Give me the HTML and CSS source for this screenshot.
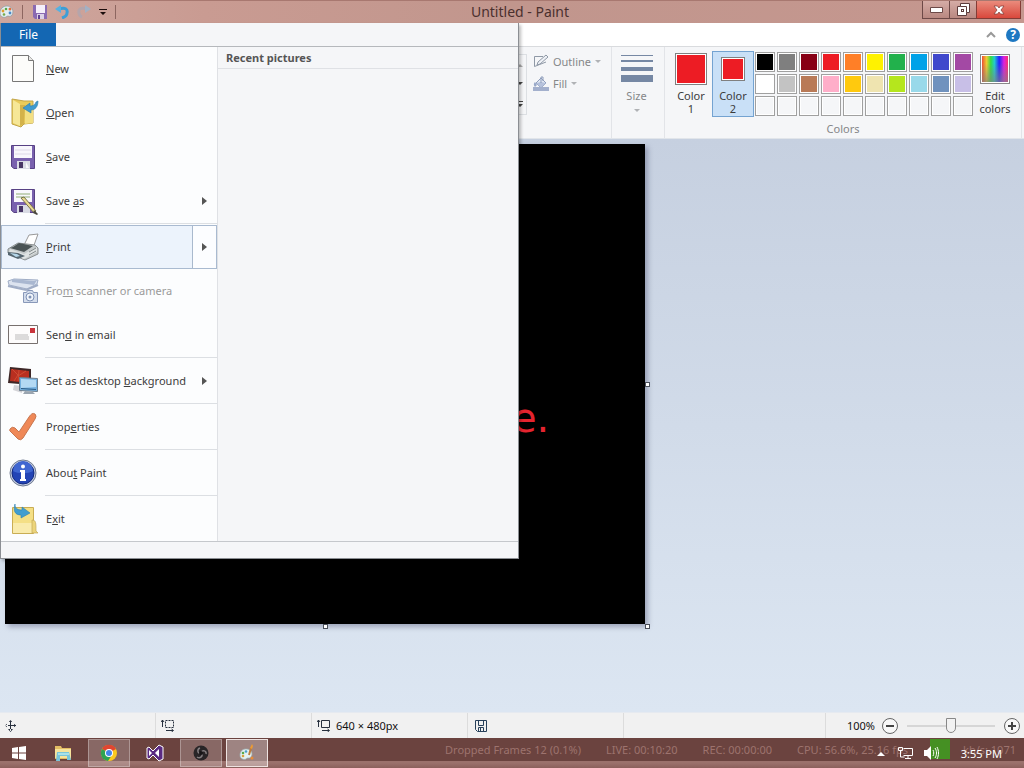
FILE: index.html
```html
<!DOCTYPE html>
<html lang="en">
<head>
    <meta charset="UTF-8">
    <meta name="viewport" content="width=device-width, initial-scale=1.0">
    <title>Untitled - Paint</title>
    <link rel="stylesheet" href="styles.css">
</head>
<body>
    <!-- Title bar -->
    <header class="titlebar">
        <div class="quick">
            <svg class="app-icon" width="14" height="14" viewBox="0 0 14 14"><path d="M7 1C3 1 0 4 0 8c0 4 4 5 6 4 2-2 3 0 5-1 3-2 3-10-4-10z" fill="#e4eef2" stroke="#8a9ba0" stroke-width=".7"/><circle cx="3" cy="6" r="1.4" fill="#e0a030"/><circle cx="6" cy="4" r="1.3" fill="#58a848"/><circle cx="10" cy="4" r="1.5" fill="#de7040"/><circle cx="10" cy="8" r="1.4" fill="#4b8bc8"/><circle cx="4" cy="9.500" r="1.300" fill="#74a94c"/></svg>
            <span class="bar"></span>
            <button class="quick-btn" aria-label="Save"><svg width="14" height="14" viewBox="0 0 14 14"><path d="M0 0h14v14H2l-2-2z" fill="#8a6ab2"/><path d="M3 0h9v8H3z" fill="#f5effa"/><path d="M4 9h7v5H4z" fill="#dcd2e6"/><path d="M5 10h2v4H5z" fill="#614194"/></svg></button>
            <button class="quick-btn" aria-label="Undo"><svg width="14" height="14" viewBox="0 0 14 14"><path d="M4 4c6-2 9 0 8 4 0 2-2 4-5 5" fill="none" stroke="#3d9ed6" stroke-width="3"/><path d="M0 4l6-4v8z" fill="#55b1e2"/></svg></button>
            <button class="quick-btn redo" aria-label="Redo"><svg width="14" height="14" viewBox="0 0 14 14"><path d="M10 4C4 2 1 4 2 8c0 2 1 3 3 4" fill="none" stroke="#b5a5ab" stroke-width="3"/><path d="M14 4L8 0v8z" fill="#a3b1c4"/></svg></button>
            <button class="quick-btn" aria-label="Customize"><svg width="8" height="8" viewBox="0 0 8 8"><path d="M0 1h8v1H0zM1 4h6L4 7z" fill="#1b0d0c"/></svg></button>
            <span class="bar"></span>
        </div>
        <h1 class="title">Untitled - Paint</h1>
        <div class="window-buttons">
            <button class="win-btn" aria-label="Minimize"><svg width="13" height="6" viewBox="0 0 13 6"><path d="M.5.500h12v5H.5z" fill="#fff" stroke="#6d4a48"/></svg></button>
            <button class="win-btn" aria-label="Restore"><svg width="13" height="13" viewBox="0 0 13 13"><path d="M3.500.500h9v9h-3v3h-9v-9h3z" fill="#fff" stroke="#5d3d3c"/><path d="M3.500 3.500h6v6" fill="none" stroke="#5d3d3c"/><path d="M4 6h3v3H4z" fill="#5d3d3c"/><path d="M5 7h1v1H5z" fill="#fff"/></svg></button>
            <button class="win-btn close" aria-label="Close"><svg width="12" height="10" viewBox="0 0 12 10"><path d="M1 1h3.500L6 3l1.500-2H11L8 5l3 4H7.500L6 7 4.500 9H1l3-4z" fill="#fff" stroke="#7c3630" stroke-width=".7"/></svg></button>
        </div>
    </header>

    <div class="tabs">
        <svg width="10" height="7" viewBox="0 0 10 7"><path d="M1 6l4-4 4 4" fill="none" stroke="#999" stroke-width="2"/></svg>
        <button class="help" aria-label="Help">?</button>
    </div>

    <!-- Ribbon -->
    <section class="ribbon">
        <div class="group shapes">
            <div class="gallery-scroll">
                <svg width="6" height="4" viewBox="0 0 6 4"><path d="M0 4l3-3 3 3z" fill="#aaa"/></svg>
                <svg width="6" height="4" viewBox="0 0 6 4"><path d="M0 0h6L3 3z" fill="#444"/></svg>
                <svg width="6" height="6" viewBox="0 0 6 6"><path d="M0 0h6v1H0zM0 3h6L3 6z" fill="#444"/></svg>
            </div>
            <div class="shape-options">
                <button class="option">
                    <svg width="16" height="14" viewBox="0 0 16 14"><path d="M10 2.500H1.500v10L13 8" fill="none" stroke="#8f99a6"/><path d="M4 11l1-3 8-7 2 2-8 7z" fill="#eef1f6" stroke="#8f99a6"/></svg>
                    Outline <i class="caret"></i>
                </button>
                <button class="option">
                    <svg width="16" height="15" viewBox="0 0 16 15"><path d="M0 11h16v4H0z" fill="#a3b0cd"/><path d="M3 7l5-5 5 5-5 5z" fill="#e2e8f3" stroke="#8d9cba"/><path d="M3 7l5-1 5 1-5 5z" fill="#b6c2dc"/><path d="M8 7V1h2v4" fill="none" stroke="#8d9cba"/><path d="M2 6c-2 2-1 4 0 5l2-2z" fill="#98a8c8"/></svg>
                    Fill <i class="caret"></i>
                </button>
            </div>
        </div>
        <div class="group">
            <button class="size-btn">
                <svg width="32" height="28" viewBox="0 0 32 28"><path d="M0 1h32v1H0zM0 6h32v2H0zM0 13h32v4H0zM0 21h32v7H0z" fill="#7688a4"/></svg>
                <span>Size</span>
                <i class="caret"></i>
            </button>
        </div>
        <div class="group colors">
            <div class="colors-row">
                <button class="color-btn"><span class="swatch-big"></span>Color<br>1</button>
                <button class="color-btn active"><span class="swatch-big small"></span>Color<br>2</button>
                <div class="palette">
                    <button class="cell black" aria-label="Black"></button>
                    <button class="cell gray" aria-label="Gray"></button>
                    <button class="cell dark-red" aria-label="Dark red"></button>
                    <button class="cell red" aria-label="Red"></button>
                    <button class="cell orange" aria-label="Orange"></button>
                    <button class="cell yellow" aria-label="Yellow"></button>
                    <button class="cell green" aria-label="Green"></button>
                    <button class="cell turquoise" aria-label="Turquoise"></button>
                    <button class="cell indigo" aria-label="Indigo"></button>
                    <button class="cell purple" aria-label="Purple"></button>
                    <button class="cell white" aria-label="White"></button>
                    <button class="cell light-gray" aria-label="Light gray"></button>
                    <button class="cell brown" aria-label="Brown"></button>
                    <button class="cell rose" aria-label="Rose"></button>
                    <button class="cell gold" aria-label="Gold"></button>
                    <button class="cell light-yellow" aria-label="Light yellow"></button>
                    <button class="cell lime" aria-label="Lime"></button>
                    <button class="cell light-turquoise" aria-label="Light turquoise"></button>
                    <button class="cell blue-gray" aria-label="Blue-gray"></button>
                    <button class="cell lavender" aria-label="Lavender"></button>
                    <button class="cell" aria-label="Custom 1"></button>
                    <button class="cell" aria-label="Custom 2"></button>
                    <button class="cell" aria-label="Custom 3"></button>
                    <button class="cell" aria-label="Custom 4"></button>
                    <button class="cell" aria-label="Custom 5"></button>
                    <button class="cell" aria-label="Custom 6"></button>
                    <button class="cell" aria-label="Custom 7"></button>
                    <button class="cell" aria-label="Custom 8"></button>
                    <button class="cell" aria-label="Custom 9"></button>
                    <button class="cell" aria-label="Custom 10"></button>
                </div>
                <button class="color-btn edit"><span class="rainbow"></span>Edit<br>colors</button>
            </div>
            <div class="group-name">Colors</div>
        </div>
    </section>

    <!-- Drawing area -->
    <main class="workspace">
        <div class="canvas">
            <span class="canvas-text">e.</span>
            <span class="handle right"></span>
            <span class="handle bottom"></span>
            <span class="handle corner"></span>
        </div>
    </main>

    <!-- Status bar -->
    <footer class="status">
        <div class="status-cell move"><svg width="12" height="12" viewBox="0 0 12 12"><path d="M5 1h1v10H5zM0 6V5h11v1zM3 3l2.500-3L8 3zM3 9l2.500 3L8 9zM3 3L0 5.500 3 8zM8 3l3 2.500L8 8z" fill="#27303e"/><path d="M2 2h3v3H2zM6 2h3v3H6zM2 6h3v3H2zM6 6h3v3H6z" fill="#f1f1f1"/></svg></div>
        <div class="status-cell"><svg width="14" height="13" viewBox="0 0 14 13"><path d="M1.500 1v7M0 3l1.500-2L3 3M5 11.500h7M10.500 10l2 1.500-2 1.500" fill="none" stroke="#27303e"/><path d="M4.500 1.500h8v7h-8z" fill="none" stroke="#27303e" stroke-dasharray="2 1"/></svg></div>
        <div class="status-cell"><svg width="14" height="13" viewBox="0 0 14 13"><path d="M1.500 1v7M0 3l1.500-2L3 3M5 11.500h7M10.500 10l2 1.500-2 1.500M4.500 1.500h8v7h-8z" fill="none" stroke="#27303e"/></svg>640 × 480px</div>
        <div class="status-cell disk"><svg width="12" height="12" viewBox="0 0 12 12"><path d="M.5 .5h11v11h-9l-2-2zM3.500 .5v5h5v-5M3.500 11.500v-4h5v4M5.500 8v3" fill="none" stroke="#27405a"/></svg></div>
        <div class="status-cell"></div>
        <div class="zoom">
            <label for="zoom">100%</label>
            <button class="zoom-btn" aria-label="Zoom out"><svg width="8" height="8" viewBox="0 0 8 8"><path d="M0 3h8v2H0z" fill="#444"/></svg></button>
            <input id="zoom" class="slider" type="range" min="0" max="100" value="50">
            <button class="zoom-btn" aria-label="Zoom in"><svg width="8" height="8" viewBox="0 0 8 8"><path d="M0 3h8v2H0zM3 0h2v8H3z" fill="#444"/></svg></button>
        </div>
    </footer>

    <!-- Taskbar -->
    <nav class="taskbar">
        <button class="task start" aria-label="Start"><svg width="14" height="14" viewBox="0 0 14 14"><path d="M0 2l6-1v5.500H0zM7 1l7-1v6.500H7zM0 7.500h6V13l-6-1zM7 7.500h7V14l-7-1z" fill="#fff"/></svg></button>
        <button class="task" aria-label="File Explorer"><svg width="18" height="18" viewBox="0 0 18 18"><path d="M1 2h6l1 2h9v11H1z" fill="#e3bd63"/><path d="M1 5h16v9H1z" fill="#f7e39b"/><path d="M3 8h12l2 8h-4v-4H6v5H2z" fill="#79c5d9"/><path d="M4 9h11v2H4z" fill="#a9e1e8"/></svg></button>
        <button class="task open" aria-label="Chrome"><svg width="18" height="18" viewBox="0 0 18 18"><circle cx="9" cy="9" r="8" fill="#fbc91f"/><path d="M9 9L2 5a8 8 0 0 1 14-0z" fill="#df4632"/><path d="M2 5a8 8 0 0 0 6 12l4-6-3-2z" fill="#2ea352"/><circle cx="9" cy="9" r="4" fill="#fff"/><circle cx="9" cy="9" r="3" fill="#4285e8"/></svg></button>
        <button class="task" aria-label="Visual Studio"><svg width="18" height="18" viewBox="0 0 18 18"><path d="M1 4l2-1 4 4 6-6 4 2v12l-4 2-6-6-4 4-2-1z" fill="#5b2b83" stroke="#fff"/><path d="M3 6v6l3-3zM9 9l4 4V5z" fill="#fff"/></svg></button>
        <button class="task open" aria-label="OBS"><svg width="16" height="16" viewBox="0 0 16 16"><circle cx="8" cy="8" r="7.500" fill="#292527"/><path d="M8 8c-4 1-4-4-1-5M8 8c1-4 6-2 5 1M8 8c3 3-1 6-4 4" fill="none" stroke="#847e80" stroke-width="1.500"/><circle cx="8" cy="8" r="2" fill="#171517"/></svg></button>
        <button class="task open current" aria-label="Paint"><svg width="16" height="18" viewBox="0 0 16 18"><path d="M7 5C3 5 1 8 1 11c0 4 4 5 6 4 1-2 3 0 5-2 2-3 1-8-5-8z" fill="#e5f1f2" stroke="#9cb3b6" stroke-width=".7"/><circle cx="4" cy="9" r="1.300" fill="#5aa94b"/><circle cx="7" cy="7.500" r="1.300" fill="#49a0ca"/><circle cx="4" cy="12" r="1.300" fill="#d9a13d"/><path d="M10 11l2-7" stroke="#bd7d3c" stroke-width="2"/><path d="M11 4l2-4 1 2-1 3z" fill="#ed9a32"/><circle cx="13" cy="14" r="1.500" fill="#e78c37"/></svg></button>
        <div class="stats">
            <span>Dropped Frames 12 (0.1%)</span>
            <span>LIVE: 00:10:20</span>
            <span>REC: 00:00:00</span>
            <span>CPU: 56.6%, 25.16 fps</span>
            <span class="bitrate">kb/s: 1071</span>
        </div>
        <div class="tray">
            <svg width="8" height="5" viewBox="0 0 8 5"><path d="M0 5l4-4 4 4z" fill="#fff"/></svg>
            <svg width="15" height="14" viewBox="0 0 15 14"><path d="M5.500 2.500h9v7h-9M10 10v3M7 12.500h6M2.500 5v6h4" fill="none" stroke="#fff"/><path d="M.5 1.500h4v3h-4z" fill="none" stroke="#fff"/></svg>
            <span class="live-block"></span>
            <svg class="speaker" width="15" height="14" viewBox="0 0 15 14"><path d="M0 4h3l4-4v14l-4-4H0z" fill="#fff"/><path d="M9 4c1 2 1 4 0 6M11 2c2 3 2 7 0 10M13 1c2 4 2 8 0 12" fill="none" stroke="#fff"/></svg>
            <time class="clock">3:55 PM</time>
        </div>
    </nav>

    <!-- File menu, lies over the ribbon and the canvas -->
    <div class="file-menu">
        <div class="menu-top"><button class="file-tab">File</button></div>
        <div class="menu-body">
            <ul class="menu-list">
                <li><button class="item">
                    <svg width="30" height="30" viewBox="0 0 30 30"><path d="M4.500 1.500h16l5 5v21h-21z" fill="#fcfcfa" stroke="#777"/><path d="M20.500 1.500v5h5" fill="#e8e8e6" stroke="#777"/></svg>
                    <span><u>N</u>ew</span></button></li>
                <li><button class="item">
                    <svg width="30" height="30" viewBox="0 0 30 30"><path d="M4 1l12 2h9v22l-9 1-3 3-9-3z" fill="#e9cb5b" stroke="#c2a548"/><path d="M5 2l7 4v22l-7-3z" fill="#f6e797"/><path d="M12 7h5l-1 19-4 2z" fill="#d3b24a"/><path d="M17 11h8v14l-8 1z" fill="#f3df82"/><path d="M30 3c0 6-3 9-7 9v3l-8-5 7-5v3c3 0 5-1 6-4z" fill="#3f9bcf" stroke="#2a7cae" stroke-width=".6"/></svg>
                    <span><u>O</u>pen</span></button></li>
                <li><button class="item">
                    <svg width="30" height="30" viewBox="0 0 30 30"><path d="M3.500 3.500h23v23H6l-2.500-2z" fill="#7961ae" stroke="#574184"/><path d="M6 4h18v12H6z" fill="#f8f7fc"/><path d="M7 8h16M7 12h16" stroke="#ded9e8"/><path d="M9 19h13v8H9z" fill="#d9dbe4"/><path d="M11 20h4v6h-4z" fill="#473664"/><path d="M18 20l3 6h-3z" fill="#f9f9fb"/></svg>
                    <span><u>S</u>ave</span></button></li>
                <li><button class="item">
                    <svg width="30" height="30" viewBox="0 0 30 30"><path d="M3.500 3.500h23v23H6l-2.500-2z" fill="#7961ae" stroke="#574184"/><path d="M6 4h18v12H6z" fill="#f8f7fc"/><path d="M8 8h14M8 11h14" stroke="#91ad77"/><path d="M9 19h13v8H9z" fill="#d9dbe4"/><path d="M11 20h4v6h-4z" fill="#473664"/><path d="M13 12l3-1 12 14-2 2z" fill="#e9db91" stroke="#77704a"/><path d="M26 24l4 4-1 1-4-2z" fill="#4b4842"/></svg>
                    <span>Save <u>a</u>s</span><i class="arrow"></i></button></li>
                <li class="divided hovered"><button class="item">
                    <svg width="32" height="30" viewBox="0 0 32 30"><path d="M17 13l5-10 9-1-5 14z" fill="#fff" stroke="#999"/><path d="M1 17l10-6 17 2 3 3v6l-13 6-17-7z" fill="#c3c8c9" stroke="#8a8f90"/><path d="M6 15l6-4 14 3-9 6-14-4z" fill="#4b5455"/><path d="M3 17l14 5 13-7v5l-13 7-15-6z" fill="#dee2e2"/><path d="M1 20l10 1 7 3-7 3-10-4z" fill="#55656f"/><path d="M3 21l7 1 3 2-4 1z" fill="#b4d5e8"/><path d="M22 20l7-4M22 23l7-4" stroke="#82898a"/></svg>
                    <span><u>P</u>rint</span><i class="arrow"></i></button></li>
                <li><button class="item" disabled>
                    <svg width="32" height="30" viewBox="0 0 32 30"><path d="M1 5l6-2 24 1-1 4-10 5-18-4z" fill="#dce3ef" stroke="#a0adc6"/><path d="M5 3l22 2 3-1-3 5L5 6z" fill="#a9b7d0"/><path d="M1 10l18 4 12-5" fill="none" stroke="#a0adc6" stroke-width="2"/><path d="M16.500 16.500h3l1-2h5l1 2h4v10h-14z" fill="#d3dceb" stroke="#8898b9"/><circle cx="23" cy="21" r="4" fill="#f0f4fa" stroke="#7e91b5"/><circle cx="23" cy="21" r="1.500" fill="#7e91b5"/></svg>
                    <span>Fro<u>m</u> scanner or camera</span></button></li>
                <li><button class="item">
                    <svg width="32" height="30" viewBox="0 0 32 30"><path d="M1.500 5.500h29v18h-29z" fill="#fdfcfc" stroke="#77706e"/><path d="M23 8h5v5h-5z" fill="#c9343c"/><path d="M8 15h13M8 17h14M8 19h14" stroke="#aaa" stroke-width=".8"/></svg>
                    <span>Sen<u>d</u> in email</span></button></li>
                <li class="divided"><button class="item">
                    <svg width="32" height="30" viewBox="0 0 32 30"><path d="M3 1l21 2v16L1 17z" fill="#3d2727"/><path d="M4 3l18 2v12L3 15z" fill="#b92f20"/><path d="M5 3l6 6-4 6M12 4l-1 11M19 5l-8 5" stroke="#cf4c34" fill="none"/><path d="M7 19l8 1v7l-9-3z" fill="#d4d4d8"/><path d="M12.500 11.500l18 1v13l-18-1z" fill="#75b1e0" stroke="#6f7f8d"/><path d="M14 13l15 1v7l-15 1z" fill="#b4d9f3"/><path d="M14 22l15 1v1l-15-1z" fill="#2c5a83"/><path d="M18 25l8 1 2 2H16z" fill="#9aa5b0"/></svg>
                    <span>Set as desktop <u>b</u>ackground</span><i class="arrow"></i></button></li>
                <li class="divided"><button class="item">
                    <svg width="32" height="30" viewBox="0 0 32 30"><path d="M3 17q2-3 5-1l4 4L22 5q3-5 6-3 2 2 0 5L16 26q-2 3-5 1L4 20q-2-1-1-3z" fill="#ef8857" stroke="#c7764f"/></svg>
                    <span>Prop<u>e</u>rties</span></button></li>
                <li class="divided"><button class="item">
                    <svg width="30" height="30" viewBox="0 0 30 30"><circle cx="15" cy="15" r="13" fill="#c3cce0" stroke="#6f7a91"/><circle cx="15" cy="15" r="11" fill="#2344b5" stroke="#12297e"/><path d="M5 13a10 10 0 0 1 20 0c-5 3-15 3-20 0z" fill="#3f66d1"/><circle cx="15" cy="8.500" r="2" fill="#fff"/><path d="M12 12h5v9h1v2h-6v-2h1v-7h-1z" fill="#fff"/></svg>
                    <span>Abou<u>t</u> Paint</span></button></li>
                <li class="divided"><button class="item">
                    <svg width="30" height="32" viewBox="0 0 30 32"><path d="M4.500 4.500h21v26h-21z" fill="#f4df85" stroke="#c9ad54"/><path d="M5 20h20v10H5z" fill="#f9ebac"/><path d="M24 17c4 0 4 3 4 11l2 2h-6z" fill="#ecd47a" stroke="#c2a858" stroke-width=".7"/><path d="M7 1c0 4 2 6 7 6V4l8 6-9 5v-3c-6 0-8-4-6-11z" fill="#409dcf" stroke="#2d7fae" stroke-width=".6"/></svg>
                    <span>E<u>x</u>it</span></button></li>
            </ul>
            <div class="recent"><h2>Recent pictures</h2></div>
        </div>
        <div class="menu-bottom"></div>
    </div>
</body>
</html>
```
FILE: styles.css
```css
*,
*::before {
    box-sizing: border-box;
}

body {
    margin: 0;
    height: 100vh;
    display: flex;
    flex-direction: column;
    overflow: hidden;
    position: relative;
    font-family: "Noto Sans", sans-serif;
    font-size: 11px;
    line-height: 13px;
    color: #3c3c3c;
    background: #d5dfec;
}

button {
    margin: 0;
    padding: 0;
    border: 0;
    background: none;
    font: inherit;
    color: inherit;
}

svg {
    display: block;
    flex: none;
}

/* Title bar */
.titlebar {
    display: flex;
    height: 23px;
    flex: none;
    background: linear-gradient(90deg, #cfa79e, #c99b92 20%, #c1968d 50%, #c5978f);
    border-top: 1px solid #a87870;
}

.quick {
    display: flex;
    align-items: center;
    width: 118px;
    gap: 8px;
}

.bar {
    width: 1px;
    height: 14px;
    margin-right: 2px;
    background: #8d6660;
}

.title {
    flex: 1;
    margin: 0;
    text-align: center;
    font-size: 14px;
    line-height: 22px;
    font-weight: normal;
    color: #4b302e;
}

.window-buttons {
    display: flex;
    padding-right: 3px;
    height: 18px;
}

.win-btn {
    width: 27px;
    display: flex;
    align-items: center;
    justify-content: center;
    background: linear-gradient(#d5aca6, #b98881);
    border: 1px solid #6d4947;
    border-top: 0;
    border-right: 0;
}

.close {
    width: 45px;
    border: 1px solid #843c36;
    border-top: 0;
    background: linear-gradient(#ea8b7c, #d9483c);
}

.tabs {
    display: flex;
    flex: none;
    justify-content: flex-end;
    align-items: center;
    gap: 10px;
    height: 24px;
    padding-right: 4px;
    background: #fff;
    border-bottom: 1px solid #d9dbde;
}

.help {
    width: 14px;
    height: 14px;
    border-radius: 50%;
    background: #1e78c2;
    color: #fff;
    font-weight: bold;
    font-size: 12px;
    line-height: 14px;
}

/* Ribbon */
.ribbon {
    display: flex;
    flex: none;
    height: 92px;
    background: #f5f6f8;
    border-bottom: 1px solid #e1e5ea;
}

.group {
    display: flex;
    padding-top: 4px;
    border-right: 1px solid #e2e4e8;
    color: #858789;
}

.shapes {
    width: 612px;
    justify-content: flex-end;
    gap: 6px;
    padding-right: 10px;
}

.gallery-scroll {
    width: 11px;
    height: 61px;
    display: flex;
    flex-direction: column;
    justify-content: space-around;
    align-items: flex-start;
    margin-top: 3px;
    border: 1px solid #dcdfe3;
}

.shape-options {
    display: flex;
    flex-direction: column;
}

.option {
    display: flex;
    align-items: center;
    gap: 4px;
    height: 22px;
    padding-bottom: 2px;
    color: #858789;
}

.caret {
    border: 3px solid transparent;
    border-top-color: #b0b2b5;
    border-bottom: 0;
}

.size-btn {
    width: 49px;
    display: flex;
    flex-direction: column;
    align-items: center;
    padding-top: 3px;
    margin-right: 3px;
    gap: 7px;
}

.colors {
    flex-direction: column;
    padding: 4px 5px 0;
}

.colors-row {
    display: flex;
}

.color-btn {
    width: 42px;
    height: 66px;
    display: block;
    border: 1px solid transparent;
    color: #3c3c3c;
}

.active {
    background: #c9e0f7;
    border-color: #74a3d1;
}

.swatch-big {
    display: block;
    width: 32px;
    height: 32px;
    margin: 0 auto 4px;
    background: #ed1c24;
    border: 1px solid #808080;
    box-shadow: inset 0 0 0 1px #fff;
}

.small {
    width: 24px;
    height: 24px;
    margin: 4px auto 8px;
}

.palette {
    display: grid;
    grid-template-columns: repeat(10, 20px);
    grid-auto-rows: 20px;
    gap: 2px;
    margin: 1px 1px 0;
}

.cell {
    border: 1px solid #a0a0a0;
    box-shadow: inset 0 0 0 1px #fff;
}

.black { background: #000; }
.gray { background: #7f7f7f; }
.dark-red { background: #880015; }
.red { background: #ed1c24; }
.orange { background: #ff7f27; }
.yellow { background: #fff200; }
.green { background: #22b14c; }
.turquoise { background: #00a2e8; }
.indigo { background: #3f48cc; }
.purple { background: #a349a4; }
.white { background: #fff; }
.light-gray { background: #c3c3c3; }
.brown { background: #b97a57; }
.rose { background: #ffaec9; }
.gold { background: #ffc90e; }
.light-yellow { background: #efe4b0; }
.lime { background: #b5e61d; }
.light-turquoise { background: #99d9ea; }
.blue-gray { background: #7092be; }
.lavender { background: #c8bfe7; }

.rainbow {
    display: block;
    width: 30px;
    height: 30px;
    margin: 1px auto 5px;
    border: 1px solid #888;
    box-shadow: inset 0 0 0 1px #fff;
    background: linear-gradient(transparent 30%, rgba(128, 128, 128, 0.7)), linear-gradient(90deg, #e33, #ec3 20%, #3d4 35%, #2cc 48%, #22f 65%, #d2d 82%, #f35);
}

.group-name {
    margin-top: 5px;
    text-align: center;
}

/* Drawing area */
.workspace {
    flex: 1;
    min-height: 0;
    padding: 5px;
    background: linear-gradient(#c6d0e0, #dce6f2);
}

.canvas {
    position: relative;
    width: 640px;
    height: 480px;
    background: #000;
    box-shadow: 3px 3px 5px rgba(70, 75, 110, 0.4);
}

.canvas-text {
    position: absolute;
    left: 507px;
    top: 250px;
    font-family: "DejaVu Sans", sans-serif;
    font-size: 40px;
    line-height: 48px;
    color: #e5242f;
}

.handle {
    position: absolute;
    width: 5px;
    height: 5px;
    background: #fff;
    border: 1px solid #4a4f5a;
}

.right {
    left: 100%;
    top: 238px;
}

.bottom {
    left: 318px;
    top: 100%;
}

.corner {
    left: 100%;
    top: 100%;
}

/* Status bar */
.status {
    display: grid;
    grid-template-columns: repeat(4, 156px) 1fr 198px;
    flex: none;
    height: 26px;
    background: #f1f1f1;
    border-top: 1px solid #e6eaf0;
    color: #111;
}

.status-cell {
    display: flex;
    align-items: center;
    gap: 5px;
    padding-left: 5px;
    border-right: 1px solid #dcdcdc;
}

.disk {
    padding-left: 7px;
}

.zoom {
    display: flex;
    align-items: center;
    justify-content: flex-end;
    gap: 7px;
    padding-right: 4px;
}

.zoom-btn {
    width: 16px;
    height: 16px;
    display: flex;
    align-items: center;
    justify-content: center;
    border: 1px solid #666;
    border-radius: 50%;
    background: #f8f8f8;
}

.slider {
    appearance: none;
    width: 88px;
    height: 16px;
    margin: 0 2px;
    background: linear-gradient(#d6d6d6, #d6d6d6) center / 100% 2px no-repeat;
}

.slider::-webkit-slider-thumb {
    appearance: none;
    width: 10px;
    height: 15px;
    background: #f2f2f2;
    border: 1px solid #888;
    border-radius: 0 0 5px 5px;
}

/* Taskbar */
.taskbar {
    position: relative;
    display: flex;
    flex: none;
    gap: 4px;
    height: 30px;
    padding: 1px 0;
    background: linear-gradient(#6b433f 0 23px, #9b716c 23px 25px, #8b605c 30px);
}

.task {
    width: 42px;
    display: flex;
    align-items: center;
    justify-content: center;
}

.start {
    width: 38px;
}

.open {
    background: rgba(255, 255, 255, 0.2);
    border: 1px solid rgba(255, 255, 255, 0.3);
}

.current {
    background: rgba(255, 255, 255, 0.35);
    border-color: #eee3e1;
}

/* Stream stats show through the tray icons */
.stats {
    position: absolute;
    top: 5px;
    right: 8px;
    display: flex;
    gap: 25px;
    color: #9d736e;
    white-space: nowrap;
}

.bitrate {
    margin-left: 30px;
}

.tray {
    position: relative;
    display: flex;
    align-items: center;
    gap: 13px;
    margin-left: auto;
    padding-right: 22px;
    color: #fff;
}

.live-block {
    width: 20px;
    height: 20px;
    align-self: flex-start;
    background: #459023;
    margin-left: 4px;
}

.speaker {
    margin-left: -39px;
}

.clock {
    margin-left: 9px;
}

/* File menu */
.file-menu {
    position: absolute;
    top: 23px;
    left: 0;
    width: 519px;
    background: #f5f6f8;
    border: 1px solid #8b8e93;
    border-top: 0;
    box-shadow: 2px 2px 3px rgba(0, 0, 0, 0.25);
}

.menu-top {
    height: 24px;
    border-bottom: 1px solid #b5b8bc;
}

.file-tab {
    width: 55px;
    height: 23px;
    background: #1467b3;
    color: #fff;
    font-size: 12px;
}

.menu-body {
    display: flex;
}

.menu-list {
    width: 217px;
    margin: 0;
    padding: 0;
    list-style: none;
    background: #fcfdfe;
    border-right: 1px solid #dfe1e5;
}

.item {
    width: 100%;
    height: 44px;
    display: flex;
    align-items: center;
    padding: 0 10px 0 6px;
    text-align: left;
}

.item svg {
    width: 32px;
}

.item span {
    flex: 1;
    margin-left: 7px;
    padding-bottom: 2px;
}

.item:disabled {
    color: #9a9a9a;
}

.divided::before {
    content: "";
    display: block;
    height: 2px;
    margin-left: 44px;
    border-top: 1px solid #dcdfe3;
}

.hovered .item {
    background: linear-gradient(90deg, #ecf3fc 191px, #a9b9cd 191px 192px, #fcfdff 192px);
    box-shadow: inset 0 0 0 1px #a9bad0;
}

.arrow {
    border: 4px solid transparent;
    border-left: 5px solid #555;
    border-right: 0;
}

.recent {
    flex: 1;
}

.recent h2 {
    margin: 0;
    padding: 4px 8px;
    font-size: 11px;
    line-height: 13px;
    color: #555;
    border-bottom: 1px solid #dfe1e5;
}

.menu-bottom {
    height: 17px;
    border-top: 1px solid #c5c8cc;
}
```
